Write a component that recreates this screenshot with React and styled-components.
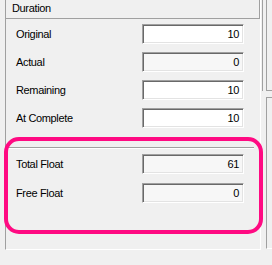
import React from "react";
import styled, { createGlobalStyle } from "styled-components";

const Global = createGlobalStyle`
  html, body { margin: 0; padding: 0; background: #f0f0f0; }
  body { font-family: "Liberation Sans", Arial, sans-serif; }
`;

const Page = styled.div`
  position: relative;
  width: 272px;
  height: 265px;
  overflow: hidden;
  background: #f0f0f0;
  display: flex;
  align-items: flex-start;
  font-family: "Liberation Sans", Arial, sans-serif;
  font-size: 11px;
  letter-spacing: -0.35px;
  color: #000;
`;

const Group = styled.section`
  margin-left: 5px;
  width: 256px;
  height: 250px;
  box-sizing: border-box;
  border-left: 1px solid #a0a0a0;
  border-right: 1px solid #ffffff;
  border-bottom: 1px solid #ffffff;
  display: flex;
  flex-direction: column;
`;

const Header = styled.div`
  height: 19px;
  box-sizing: border-box;
  border-bottom: 1px solid #a0a0a0;
  border-right: 1px solid #a0a0a0;
  padding-left: 6px;
  line-height: 16px;
`;

const Section = styled.div`
  display: flex;
  flex-direction: column;
  gap: ${(p) => p.$gap}px;
  padding-top: ${(p) => p.$top}px;
`;

const Separator = styled.div`
  margin-top: 19px;
  margin-right: 6px;
  height: 1px;
  background: #a0a0a0;
  border-bottom: 1px solid #ffffff;
`;

const Row = styled.div`
  display: flex;
  align-items: center;
  height: 20px;
  padding-left: 10px;
`;

const Label = styled.span`
  width: 126px;
  line-height: 14px;
`;

const Field = styled.div`
  width: 102px;
  height: 20px;
  box-sizing: border-box;
  border-top: 1px solid #a0a0a0;
  border-left: 1px solid #a0a0a0;
  border-bottom: 1px solid #ffffff;
  border-right: 1px solid #ffffff;
  box-shadow: inset 1px 1px 0 #696969, inset -1px -1px 0 #e3e3e3;
  background: ${(p) => (p.$readOnly ? "#f7f7f7" : "#ffffff")};
  text-align: right;
  padding-right: 4px;
  line-height: 18px;
`;

const RightColumn = styled.div`
  display: flex;
  flex-direction: column;
  margin-left: 1px;
  width: 10px;
`;

const TopPane = styled.div`
  height: 91px;
  box-sizing: border-box;
  border-left: 1px solid #a0a0a0;
  padding-left: 3px;
`;

const TopInner = styled.div`
  height: 91px;
  box-sizing: border-box;
  border-left: 1px solid #a0a0a0;
  border-bottom: 1px solid #a0a0a0;
`;

const BottomPane = styled.div`
  margin-top: 6px;
  margin-left: 4px;
  height: 152px;
  box-sizing: border-box;
  border-left: 1px solid #a0a0a0;
  border-top: 1px solid #a0a0a0;
  border-bottom: 1px solid #ffffff;
`;

const Highlight = styled.div`
  position: absolute;
  left: 4px;
  top: 137px;
  width: 259px;
  height: 97px;
  box-sizing: border-box;
  border: 4px solid #ff0a82;
  border-radius: 15px;
  pointer-events: none;
`;

const durationRows = [
  { label: "Original", value: "10", readOnly: false },
  { label: "Actual", value: "0", readOnly: true },
  { label: "Remaining", value: "10", readOnly: false },
  { label: "At Complete", value: "10", readOnly: false },
];

const floatRows = [
  { label: "Total Float", value: "61", readOnly: true },
  { label: "Free Float", value: "0", readOnly: true },
];

function FieldRow({ label, value, readOnly }) {
  return (
    <Row>
      <Label>{label}</Label>
      <Field $readOnly={readOnly}>{value}</Field>
    </Row>
  );
}

export default function App() {
  return (
    <>
      <Global />
      <Page>
        <Group>
          <Header>Duration</Header>
          <Section $gap={8} $top={5}>
            {durationRows.map((r) => (
              <FieldRow key={r.label} {...r} />
            ))}
          </Section>
          <Separator />
          <Section $gap={9} $top={5}>
            {floatRows.map((r) => (
              <FieldRow key={r.label} {...r} />
            ))}
          </Section>
        </Group>
        <RightColumn>
          <TopPane>
            <TopInner />
          </TopPane>
          <BottomPane />
        </RightColumn>
        <Highlight />
      </Page>
    </>
  );
}
